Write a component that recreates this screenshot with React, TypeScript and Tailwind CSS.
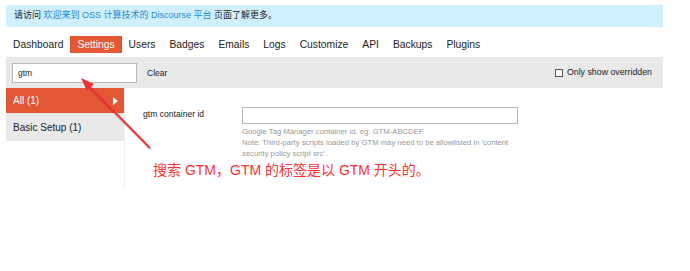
import React from 'react'

const 导航项 = ['Dashboard', 'Settings', 'Users', 'Badges', 'Emails', 'Logs', 'Customize', 'API', 'Backups', 'Plugins']

export default function App() {
    return (
        <div className="relative min-h-[271px] w-[690px] bg-white pt-[5px] pl-[6px] font-['Liberation_Sans','Noto_Sans_CJK_SC',sans-serif] text-[#222]">
            {/* 顶部提示 */}
            <div className="flex h-[22px] w-[657px] items-center bg-[#d1f0ff] px-[8px] text-[9px]">
                <span>请访问&nbsp;</span>
                <span className="text-[#1e8bd1]">欢迎来到 OSS 计算技术的 Discourse 平台</span>
                <span>&nbsp;页面了解更多。</span>
            </div>

            {/* 导航 */}
            <div className="mt-[9px] flex w-[657px] border-b border-[#e6e6e6] pb-[4px]">
                {导航项.map((项) => (
                    <div
                        key={项}
                        className={
                            项 === 'Settings'
                                ? 'flex h-[17px] items-center bg-[#e45735] px-[7px] text-[10.3px] text-white'
                                : 'flex h-[17px] items-center px-[7px] text-[10.3px]'
                        }
                    >
                        {项}
                    </div>
                ))}
            </div>

            {/* 搜索栏 */}
            <div className="flex h-[30px] w-[657px] items-center bg-[#e9e9e9] px-[6px]">
                <div className="flex h-[20px] w-[125px] items-center border border-[#b8b8b8] bg-white px-[5px] text-[8.5px]">
                    gtm
                </div>
                <span className="ml-[10px] text-[8.5px]">Clear</span>
                <label className="ml-auto mr-[5px] flex items-center gap-[4px] text-[8.8px]">
                    <span className="h-[8px] w-[8px] border border-[#555] bg-white" />
                    Only show overridden
                </label>
            </div>

            <div className="flex">
                {/* 左侧分类 */}
                <div className="h-[100px] w-[119px] border-r border-[#eeeeee]">
                    <div className="relative flex h-[25px] items-center bg-[#e45735] px-[7px] text-[10px] text-white">
                        All (1)
                        <span className="absolute right-[6px] top-[9px] h-0 w-0 border-y-[4px] border-l-[5px] border-y-transparent border-l-white" />
                    </div>
                    <div className="flex h-[28px] items-center bg-[#e9e9e9] px-[7px] text-[10px]">Basic Setup (1)</div>
                </div>

                {/* 设置内容 */}
                <div className="pl-[18px] pt-[19px]">
                    <div className="flex">
                        <div className="w-[99px] pt-[1px] text-[8.6px]">gtm container id</div>
                        <div>
                            <div className="h-[17px] w-[276px] border border-[#b8b8b8] bg-white" />
                            <div className="mt-[2px] w-[290px] text-[7.7px] leading-[11px] text-[#999]">
                                Google Tag Manager container id. eg: GTM-ABCDEF.
                                <br />
                                Note: Third-party scripts loaded by GTM may need to be allowlisted in 'content
                                <br />
                                security policy script src'.
                            </div>
                        </div>
                    </div>
                    <div className="ml-[10px] mt-[1px] text-[14px] leading-[20px] text-[#ff3030]">
                        搜索 GTM，GTM 的标签是以 GTM 开头的。
                    </div>
                </div>
            </div>

            {/* 标注箭头 */}
            <svg className="pointer-events-none absolute left-0 top-0" width="690" height="271">
                <line x1="151" y1="150" x2="87" y2="85" stroke="#000" strokeOpacity="0.12" strokeWidth="3" />
                <line x1="150" y1="148" x2="86" y2="83" stroke="#ee3338" strokeWidth="2" />
                <polygon points="81,78 94,84 87,91" fill="#ee3338" />
            </svg>
        </div>
    )
}
